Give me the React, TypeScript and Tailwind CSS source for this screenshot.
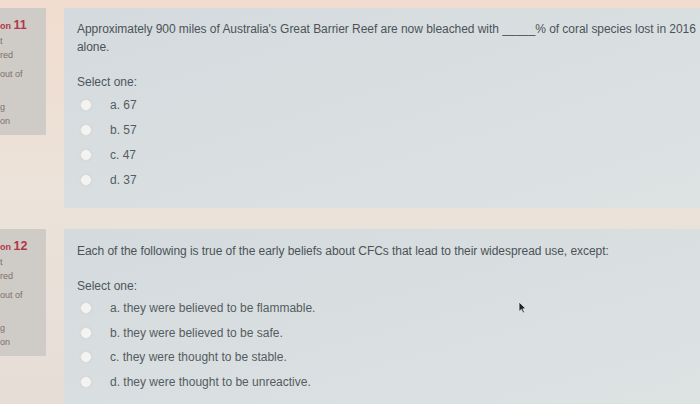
import React from 'react'

type Question = {
  num: number
  text: React.ReactNode
  options: string[]
  rowH: string
  pt: string
}

const QUESTIONS: Question[] = [
  {
    num: 11,
    text: "Approximately 900 miles of Australia's Great Barrier Reef are now bleached with _____% of coral species lost in 2016 alone.",
    options: ['a. 67', 'b. 57', 'c. 47', 'd. 37'],
    rowH: 'h-[25px]',
    pt: 'pt-[12px]',
  },
  {
    num: 12,
    text: 'Each of the following is true of the early beliefs about CFCs that lead to their widespread use, except:',
    options: [
      'a. they were believed to be flammable.',
      'b. they were believed to be safe.',
      'c. they were thought to be stable.',
      'd. they were thought to be unreactive.',
    ],
    rowH: 'h-[24.5px]',
    pt: 'pt-[13px]',
  },
]

function Radio() {
  return (
    <span className="w-[12px] h-[12px] rounded-full bg-[#f3f3f1] border border-[#dededc] shadow-[0_0_1px_rgba(0,0,0,0.15)] shrink-0" />
  )
}

function QuestionRow({ q }: { q: Question }) {
  return (
    <div className="flex items-start">
      {/* info box, cut off at the left edge */}
      <div className="w-[46px] h-[127px] shrink-0 bg-[#cfcbc7] pt-[9px] text-[9px] leading-[14px] text-[#7d716c] overflow-hidden">
        <div className="text-[#b3354b] font-bold leading-[16px] whitespace-nowrap">
          <span className="text-[9px]">on </span>
          <span className="text-[12.5px]">{q.num}</span>
        </div>
        <div>t</div>
        <div>red</div>
        <div className="mt-[5px]">out of</div>
        <div className="h-[14px]" />
        <div className="mt-[5px]">g</div>
        <div>on</div>
      </div>

      {/* formulation */}
      <div
        className={`ml-[18px] flex-1 bg-gradient-to-br from-[#d4dadd] via-[#d9dfe1] to-[#dde2e3] ${q.pt} pl-[13px] ${
          q.num === 11 ? 'h-[200px]' : 'h-[175px]'
        }`}
      >
        <div className="text-[12px] leading-[18px] text-[#4c5358] tracking-[-0.05px]">{q.text}</div>
        <div className="mt-[17px] text-[12px] leading-[18px] text-[#4f565a]">Select one:</div>
        <div className="mt-[1px]">
          {q.options.map((o) => (
            <div key={o} className={`flex items-center ${q.rowH} pl-[3px]`}>
              <Radio />
              <span className="ml-[18px] text-[12px] text-[#555c60]">{o}</span>
            </div>
          ))}
        </div>
      </div>
    </div>
  )
}

export default function App() {
  return (
    <div
      className="relative w-[700px] h-[404px] overflow-hidden bg-gradient-to-b from-[#f1dccf] via-[#ebe3da] to-[#e6ded6]"
      style={{ fontFamily: '"Liberation Sans", Arial, sans-serif' }}
    >
      <div className="pt-[8px] flex flex-col gap-[21px]">
        {QUESTIONS.map((q) => (
          <QuestionRow key={q.num} q={q} />
        ))}
      </div>
      <svg className="absolute left-[518px] top-[301px]" width="9" height="13" viewBox="0 0 9 13">
        <path d="M1 1 L1 10.5 L3.3 8.4 L5 12 L6.5 11.3 L4.9 7.8 L8 7.8 Z" fill="#222" stroke="#eee" strokeWidth="0.8" />
      </svg>
    </div>
  )
}
